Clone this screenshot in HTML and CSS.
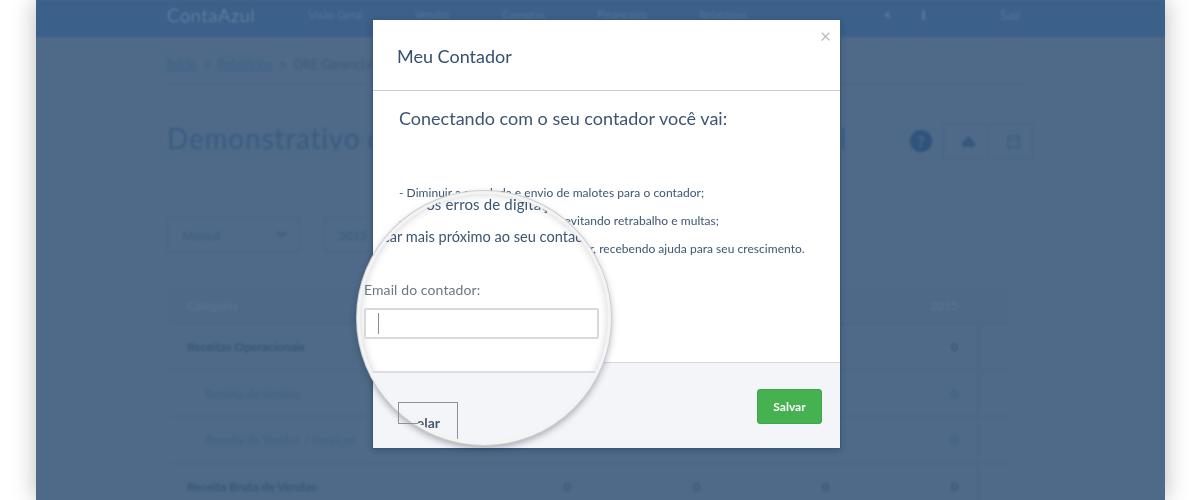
FILE: index.html
```html
<!DOCTYPE html>
<html lang="pt-BR">
<head>
  <meta charset="UTF-8" />
  <title>Meu Contador – ContaAzul</title>
  <link rel="stylesheet" href="styles.css">
</head>
<body>
  <div class="app">
    <div class="app-inner">
      <header class="topbar">
        <span class="logo">ContaAzul</span>
        <nav class="nav">
          <span>Visão Geral</span><span>Vendas</span><span>Compras</span><span>Financeiro</span><span>Relatórios</span>
        </nav>
        <div class="top-right">
          <svg class="top-icon" viewBox="0 0 14 14"><path d="M11 2 4 7l7 5z" /></svg>
          <span class="top-dot"></span>
          <span class="user">Sair</span>
        </div>
      </header>
      <div class="crumbs"><a>Início</a><i>&gt;</i><a>Relatórios</a><i>&gt;</i><span>DRE Gerencial</span></div>
      <div class="crumb-line"></div>
      <div class="title-row">
        <h1>Demonstrativo de Resultado do Exercício - Gerencial</h1>
        <div class="actions">
          <span class="help">?</span>
          <div class="btn-group">
            <span class="group-btn"><svg viewBox="0 0 16 14"><path d="M8 1 15 8v5H1V8z" /></svg></span>
            <span class="group-btn"><svg viewBox="0 0 14 14"><path d="M1 1h12v12H1zM1 5h12" /></svg></span>
          </div>
        </div>
      </div>
      <div class="filters">
        <div class="select">Mensal <i class="chev"></i></div>
        <div class="select short">2015</div>
      </div>
      <div class="table">
        <div class="row head"><span class="name">Categoria</span><span></span><span></span><span></span><span class="num">2015</span><span class="end"></span></div>
        <div class="row bold"><span class="name">Receitas Operacionais</span><span class="num">0</span><span class="num">0</span><span class="num">0</span><span class="num">0</span><span class="end"></span></div>
        <div class="row"><span class="name sub">Receita de Vendas</span><span class="num">0</span><span class="num">0</span><span class="num">0</span><span class="num">0</span><span class="end"></span></div>
        <div class="row"><span class="name sub">Receita de Vendas / Serviços</span><span class="num">0</span><span class="num">0</span><span class="num">0</span><span class="num">0</span><span class="end"></span></div>
        <div class="row bold"><span class="name">Receita Bruta de Vendas</span><span class="num">0</span><span class="num">0</span><span class="num">0</span><span class="num">0</span><span class="end"></span></div>
      </div>
    </div>
  </div>

  <div class="modal">
    <div class="modal-head">
      <h2>Meu Contador</h2>
      <span class="close">×</span>
    </div>
    <div class="modal-body">
      <h3>Conectando com o seu contador você vai:</h3>
      <p>- Diminuir a papelada e envio de malotes para o contador;</p>
      <p>- Reduzir os erros de digitação, evitando retrabalho e multas;</p>
      <p>- Ficar mais próximo ao seu contador, recebendo ajuda para seu crescimento.</p>
    </div>
    <div class="modal-foot">
      <button class="save">Salvar</button>
    </div>
  </div>

  <div class="lens">
    <div class="lens-view">
      <div class="lens-text first">Reduzir os erros de digitação</div>
      <div class="lens-text second">Ficar mais próximo ao seu contador</div>
      <label class="lens-label">Email do contador:</label>
      <div class="lens-input"><i class="caret"></i></div>
      <div class="lens-foot">
        <div class="lens-cancel">Cancelar<i class="cancel-patch"></i></div>
      </div>
    </div>
  </div>
  <div class="cancel-corner"></div>
</body>
</html>
```
FILE: styles.css
```css
* { box-sizing: border-box; margin: 0; padding: 0; }
html, body { height: 100%; overflow: hidden; background: #fff; font-family: 'Lato', 'Open Sans', sans-serif; }

/* dimmed page behind the modal */
.app {
  width: 1129px; height: 500px; margin-left: 36px; background: #4e6a88;
  box-shadow: 0 0 22px rgba(0,0,0,0.28); overflow: hidden;
}
.app-inner { filter: blur(1px); color: #3f5d80; }
.topbar {
  display: flex; align-items: center; height: 37px; padding: 0 130px 8px 133px;
  background: #3b6089; margin: 0 -2px; color: #52749a;
}
.logo { font-size: 18px; font-weight: 300; width: 141px; color: #7690ae; letter-spacing: 0.9px; }
.nav { display: flex; gap: 52px; font-size: 11px; flex: 1; }
.top-right { display: flex; align-items: center; }
.top-icon { width: 12px; height: 12px; fill: #52749a; margin-right: 30px; }
.top-dot { width: 3px; height: 10px; background: #52749a; margin-right: 75px; }
.user { font-size: 13px; width: 37px; }
.crumbs { display: flex; padding: 20px 0 0 131px; font-size: 12.5px; height: 44px; color: #40597a; }
.crumbs a { color: #3c6288; text-decoration: underline; }
.crumbs i { font-style: normal; margin: 0 7px; }
.crumb-line { height: 1px; margin: 3px 0 0 131px; width: 860px; background: #4a6584; }
.title-row { display: flex; align-items: center; height: 100px; padding: 12px 0 0 131px; white-space: nowrap; }
.title-row h1 { font-size: 28px; font-weight: 400; color: #3a5b82; letter-spacing: 0.8px; word-spacing: -1px; width: 672px; margin-top: -6px; }
.actions { display: flex; align-items: center; gap: 11px; padding-left: 71px; }
.help {
  width: 22px; height: 22px; border-radius: 50%; background: #30537d; color: #4e6a88;
  font-size: 16px; font-weight: 700; text-align: center; line-height: 22px;
}
.btn-group { display: flex; border: 1px solid #4b6684; }
.group-btn { display: flex; align-items: center; justify-content: center; width: 44px; height: 33px; padding-left: 5px; }
.group-btn + .group-btn { border-left: 1px solid #4b6684; }
.group-btn svg { width: 13px; height: 13px; fill: #37577c; stroke: #37577c; }
.group-btn + .group-btn svg { fill: none; }
.filters { display: flex; gap: 24px; padding: 33px 0 0 131px; }
.select {
  display: flex; align-items: center; justify-content: space-between; width: 133px; height: 34px;
  padding: 0 14px; border: 1px solid #4a6583; font-size: 12px; color: #3f5c7e;
}
.select.short { width: 60px; }
.chev { width: 7px; height: 7px; border-right: 2px solid #3f5c7e; border-bottom: 2px solid #3f5c7e; transform: rotate(45deg) translate(-2px,-2px); }
.table { width: 838px; margin: 36px 0 0 134px; font-size: 12px; }
.row { display: grid; grid-template-columns: 292px repeat(4, 129px) 30px; height: 46.5px; align-items: center; border-top: 1px solid #4b6684; }
.row.head { height: 35px; background: #4d6987; color: #5b7794; border-top: 0; }
.row.bold { font-weight: 700; color: #3a5679; }
.name { padding-left: 17px; }
.name.sub { padding-left: 35px; color: #456180; }
.num { text-align: right; padding-right: 20px; }
.end { height: 100%; border-left: 1px solid #4b6684; }

/* modal */
.modal {
  position: absolute; left: 373px; top: 20px; width: 467px; height: 428px;
  display: flex; flex-direction: column; background: #fff;
  box-shadow: 0 0 0 1px #3a5878, 0 2px 6px rgba(20,40,70,0.35);
}
.modal-head { position: relative; height: 71px; padding: 25px 0 0 24px; border-bottom: 1px solid #ccd0d6; }
.modal-head h2 { font-size: 18px; font-weight: 400; color: #34516f; }
.close { position: absolute; right: 9px; top: 6px; font-size: 19px; color: #bbb; line-height: 20px; }
.modal-body { flex: 1; padding: 16px 26px 0 26px; color: #3c5672; }
.modal-body h3 { font-size: 18px; font-weight: 400; margin-bottom: 50px; }
.modal-body p { font-size: 12px; line-height: 28px; letter-spacing: 0.04px; }
.modal-foot {
  display: flex; justify-content: flex-end; align-items: flex-start; height: 86px;
  padding: 26px 18px 0 0; background: #f3f5f8; border-top: 1px solid #d5d6e0;
}
.save {
  width: 65px; height: 35px; background: #45b151; color: #fff; border: 1px solid #3fa64b; border-radius: 3px;
  font-family: inherit; font-size: 12px; font-weight: 700;
}

/* magnifier over the email field */
.lens {
  position: absolute; left: 357px; top: 191px; width: 254px; height: 254px; border-radius: 50%;
  background: #fff; border: 3px solid #f4f4f4;
  box-shadow: 0 0 0 1px #cfcfcf, 0 3px 7px rgba(30,40,60,0.4);
}
.lens-view { position: absolute; inset: 0; border-radius: 50%; overflow: hidden; box-shadow: inset 0 0 8px rgba(0,0,0,0.18); }
.lens-text { position: absolute; font-size: 15px; color: #3c5672; white-space: nowrap; }
.lens-text.first { left: 12px; top: 1px; letter-spacing: 0.15px; }
.lens-text.second { left: 11px; top: 34px; font-size: 14.6px; }
.lens-label { position: absolute; left: 4px; top: 87px; font-size: 14px; color: #6b7785; letter-spacing: 0.1px; }
.lens-input {
  position: absolute; left: 4px; top: 114px; width: 235px; height: 31px;
  background: #fff; border: 2px solid #d9d9d9; border-radius: 2px;
}
.caret { display: block; width: 1px; height: 21px; margin: 3px 0 0 12px; background: #8b8b8b; }
.lens-foot { position: absolute; left: 0; right: 0; top: 177px; bottom: 0; background: #f3f5f8; border-top: 2px solid #dcdde3; }
.lens-cancel {
  position: absolute; left: 38px; top: 29px; width: 60px; height: 40px; padding: 11px 17px 0 0;
  display: flex; justify-content: flex-end; white-space: nowrap;
  border: 1px solid #8d9198; font-size: 14px; font-weight: 700; color: #49596c;
}
.cancel-patch { position: absolute; left: -30px; top: 0; width: 48px; height: 30px; background: #f3f5f8; }
.cancel-corner { position: absolute; left: 398px; top: 402px; width: 20px; height: 22px; border: solid #8d9198; border-width: 1px 0 1px 1px; }
```
